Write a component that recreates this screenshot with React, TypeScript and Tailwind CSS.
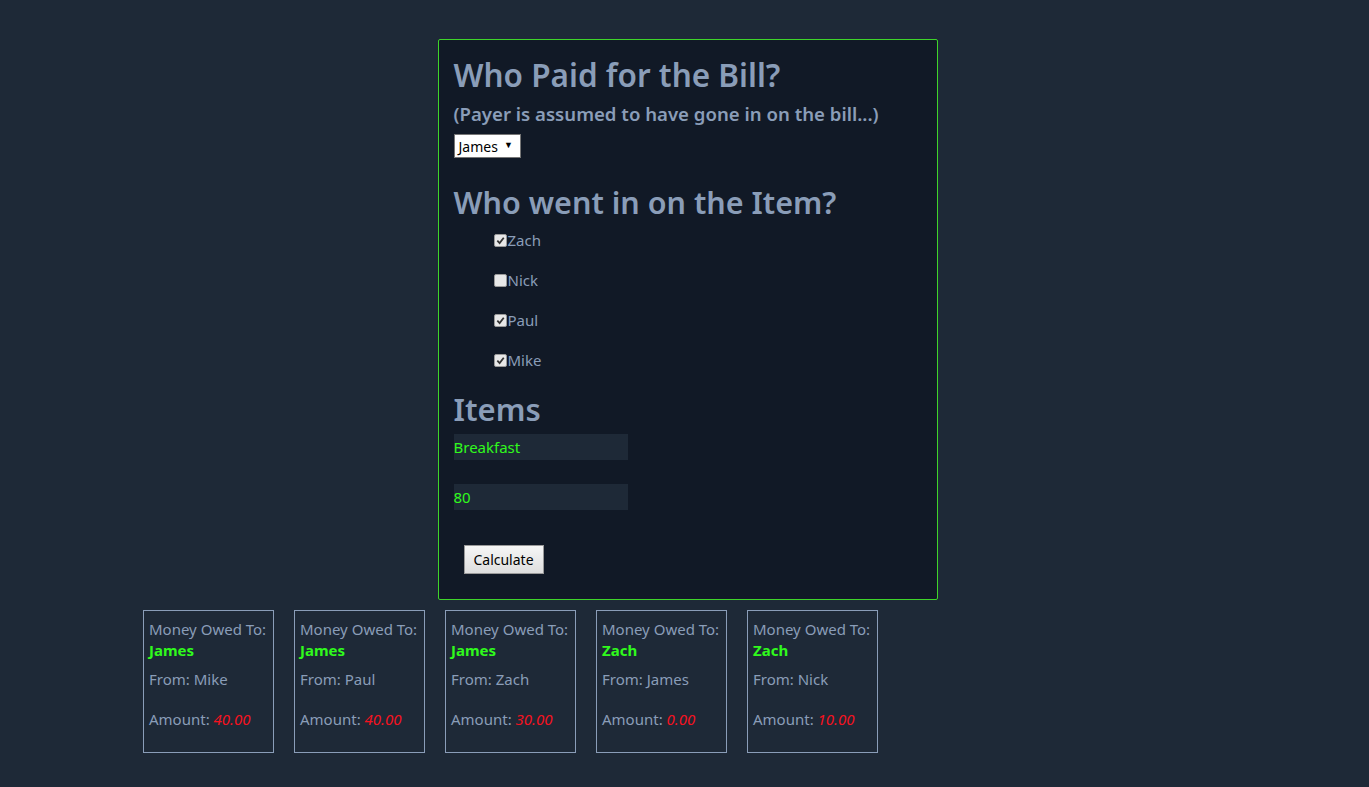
import React from 'react';

const people = [
    { name: 'Zach', checked: true },
    { name: 'Nick', checked: false },
    { name: 'Paul', checked: true },
    { name: 'Mike', checked: true },
];

const debts = [
    { to: 'James', from: 'Mike', amount: '40.00' },
    { to: 'James', from: 'Paul', amount: '40.00' },
    { to: 'James', from: 'Zach', amount: '30.00' },
    { to: 'Zach', from: 'James', amount: '0.00' },
    { to: 'Zach', from: 'Nick', amount: '10.00' },
];

const Check = ({ checked }: { checked: boolean }) => (
    <span className="w-[13px] h-[13px] rounded-[2px] border border-[#9a9a9a] bg-[#e8e8e8] flex items-center justify-center">
        {checked && (
            <svg width="9" height="9" viewBox="0 0 10 10">
                <path d="M1.5 5.2 L4 7.8 L8.6 2" stroke="#333" strokeWidth="2" fill="none" />
            </svg>
        )}
    </span>
);

const App = () => {
    return (
        <div
            className="min-h-screen bg-[#1e2937] text-[#8a9db8] pt-[39px]"
            style={{ fontFamily: '"Noto Sans", "Open Sans", sans-serif' }}
        >
            <div className="flex justify-center pl-[6px]">
                <div className="w-[500px] h-[561px] border border-[#3fd42a] rounded-[2px] bg-[#111926] px-[15px] pt-[12px]">
                    <h1 className="text-[31.5px] font-semibold leading-[46px]">Who Paid for the Bill?</h1>
                    <h3 className="text-[18.6px] font-semibold leading-[26px] mt-[3px]">(Payer is assumed to have gone in on the bill...)</h3>
                    <div className="mt-[7px] w-[67px] h-[24px] bg-white border border-[#767676] text-black text-[14px] flex items-center pl-[4px] gap-[6px]">
                        <span>James</span>
                        <span className="text-[9px] leading-none -mt-[4px]">▼</span>
                    </div>

                    <h1 className="text-[30.5px] font-semibold leading-[46px] mt-[21px]">Who went in on the Item?</h1>
                    <div className="pl-[40px] mt-[6px] flex flex-col gap-[21px]">
                        {people.map((p) => (
                            <label key={p.name} className="flex items-center gap-[1px] h-[19px] text-[15px]">
                                <Check checked={p.checked} />
                                <span>{p.name}</span>
                            </label>
                        ))}
                    </div>

                    <h1 className="text-[31px] font-semibold leading-[46px] mt-[16px]">Items</h1>
                    <div className="mt-[2px] w-[174px] h-[26px] bg-[#1e2937] text-[#30fa1c] text-[15px] flex items-center">Breakfast</div>
                    <div className="mt-[24px] w-[174px] h-[26px] bg-[#1e2937] text-[#30fa1c] text-[15px] flex items-center">80</div>
                    <button className="mt-[35px] ml-[10px] w-[80px] h-[29px] border border-[#9a9a9a] bg-gradient-to-b from-[#f6f6f6] to-[#dedede] text-black text-[14px]">
                        Calculate
                    </button>
                </div>
            </div>

            <div className="flex gap-[20px] pl-[143px] mt-[10px]">
                {debts.map((d, i) => (
                    <div key={i} className="w-[131px] h-[143px] border border-[#8a9db8] px-[5px] pt-[8px] text-[15px]">
                        <div className="leading-[20px]">Money Owed To:</div>
                        <div className="leading-[22px] text-[#30fa1c] font-bold">{d.to}</div>
                        <div className="leading-[20px] mt-[8px]">From: {d.from}</div>
                        <div className="leading-[20px] mt-[20px]">
                            Amount: <span className="italic text-[#f5121f]">{d.amount}</span>
                        </div>
                    </div>
                ))}
            </div>
        </div>
    );
};

export default App;
